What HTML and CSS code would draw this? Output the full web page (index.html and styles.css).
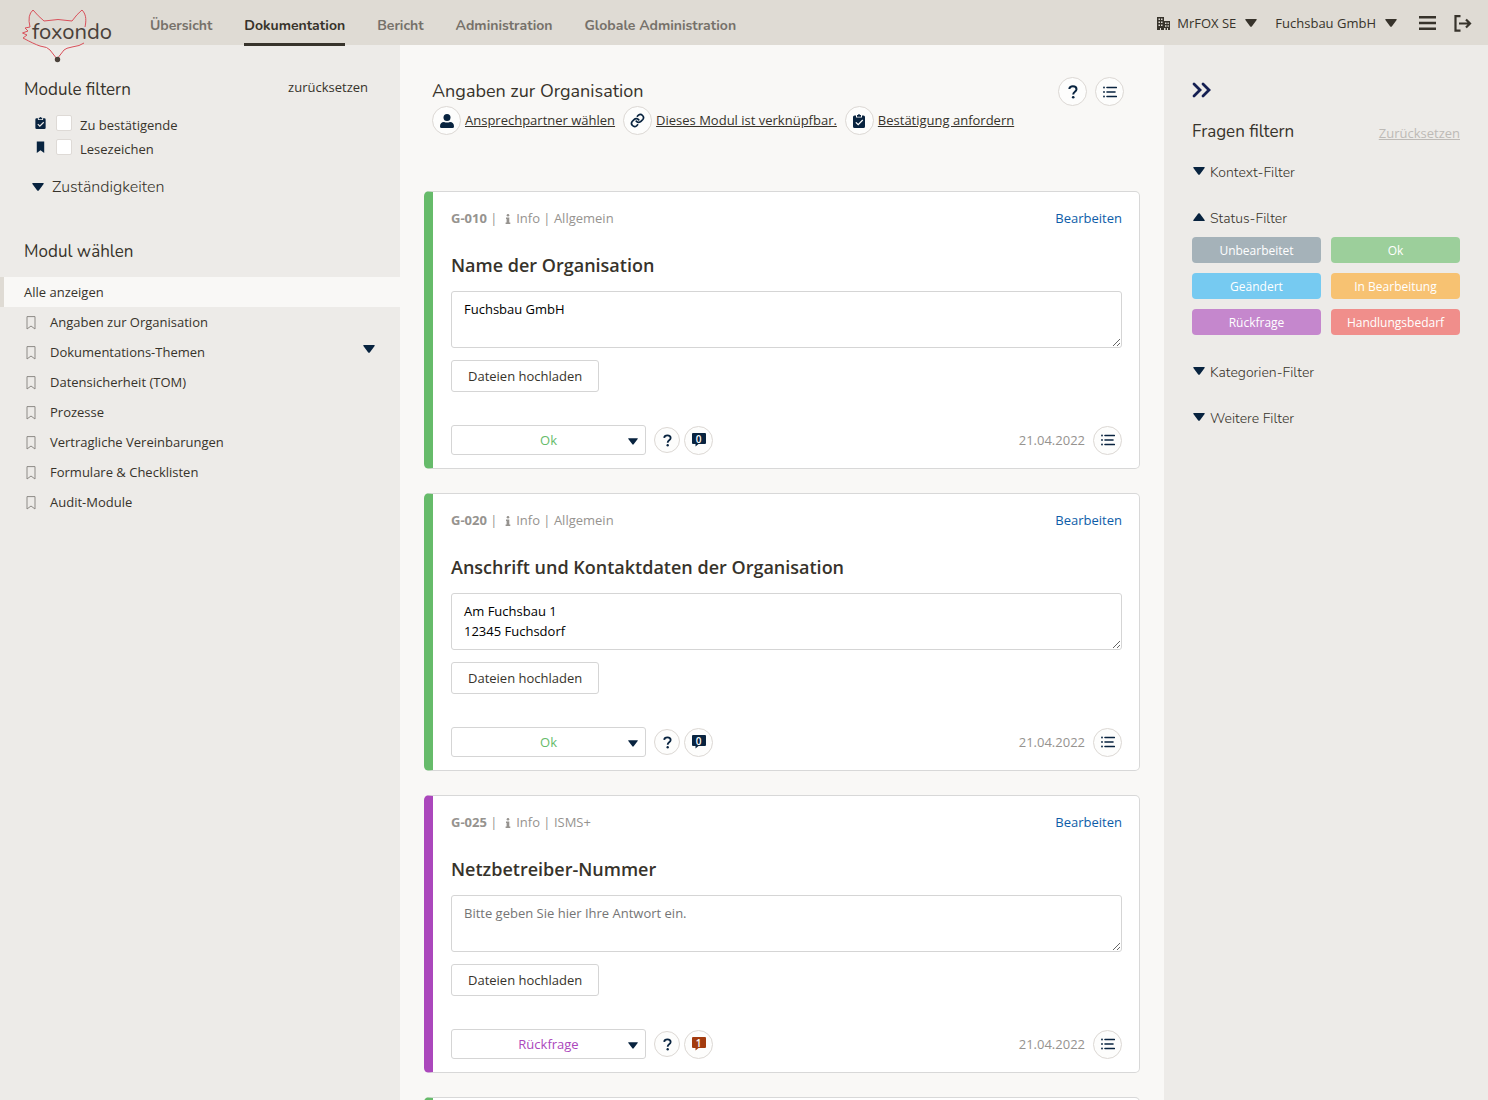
FILE: index.html
```html
<!DOCTYPE html>
<html lang="de">
<head>
    <meta charset="utf-8">
    <title>foxondo - Dokumentation</title>
    <link rel="stylesheet" href="styles.css">
</head>
<body>
    <svg class="sprite" aria-hidden="true">
        <symbol id="down" viewBox="0 0 12 8"><path d="M1 0h10q1.4 0 .6 1L6.800 7.400q-.8.900-1.600 0L.4 1Q-.4 0 1 0z"/></symbol>
        <symbol id="up" viewBox="0 0 12 8"><path d="M1 8h10q1.400 0 .6-1L6.800.6q-.8-.9-1.600 0L.4 7Q-.4 8 1 8z"/></symbol>
        <symbol id="list" viewBox="0 0 14 12"><path d="M4 1.500h9.300M4 6h8M4 10.500h9.300" stroke="currentColor" stroke-width="1.600" stroke-linecap="round"/><circle cx="1" cy="1.500" r=".9"/><circle cx="1" cy="6" r=".9"/><circle cx="1" cy="10.500" r=".9"/></symbol>
        <symbol id="help" viewBox="0 0 10 14"><path d="M1.300 4C1.500 2.200 3 1.200 4.900 1.200c2.100 0 3.600 1.200 3.600 3 0 2.600-3.300 2.500-3.300 5.200" fill="none" stroke="currentColor" stroke-width="2"/><circle cx="5.200" cy="12.300" r="1.300"/></symbol>
        <symbol id="clipboard" viewBox="0 0 12 14"><path fill-rule="evenodd" d="M1.500 1.500H3V3.500h6V1.500h1.500Q12 1.500 12 3v9.500q0 1.500-1.500 1.500h-9Q0 14 0 12.500V3q0-1.500 1.500-1.500zM9.300 5.600 5.200 9.700 3.300 7.900l-.9.900 2.800 2.800 5-5z"/><path d="M4 1h1Q6-.8 7 1h1v1.700H4z"/></symbol>
        <symbol id="bookmark" viewBox="0 0 10 14"><path d="M1 .6h8v12.400L5 10l-4 3z"/></symbol>
        <symbol id="user" viewBox="0 0 14 14"><circle cx="7" cy="3.500" r="3.500"/><path d="M0 12.500C0 9.700 1.500 8 4 8q3 1.200 6 0c2.500 0 4 1.700 4 4.500Q14 14 12.500 14h-11Q0 14 0 12.500z"/></symbol>
        <symbol id="link" viewBox="0 0 24 24"><path d="M10 13a5 5 0 0 0 7.500.5l3-3a5 5 0 0 0-7-7l-1.700 1.700M14 11a5 5 0 0 0-7.500-.5l-3 3a5 5 0 0 0 7 7l1.700-1.700" fill="none" stroke="currentColor" stroke-width="2.700" stroke-linecap="round"/></symbol>
        <symbol id="info" viewBox="0 0 6 10"><circle cx="3" cy="1.300" r="1.300"/><path d="M1 3.600h3.300v4.900h1V10H.6V8.500h1V5.100H1z"/></symbol>
        <symbol id="bubble" viewBox="0 0 14 14"><path d="M1 0h12q1 0 1 1v9q0 1-1 1H6.500L3.500 13.500V11H1Q0 11 0 10V1Q0 0 1 0z"/></symbol>
    </svg>

    <header class="topbar">
        <a class="logo" href="#" aria-label="foxondo">
            <svg width="94" height="60" viewBox="20 6 94 60">
                <path class="fox" d="M85 27C86 22 87 15 82 10Q77 14 72 21Q58 18 44 21Q38 16 33 10Q27 15 30 27L25 28L28 31L22.500 33L27 35L23 38Q34 44 40 46Q48 47 50 50L57 59L64 50Q66 48 72 47Q80 46 84 43"/>
                <circle class="nose" cx="57.500" cy="59.500" r="2.700"/>
                <text x="32" y="39">foxondo</text>
            </svg>
        </a>
        <nav class="mainnav">
            <a href="#">Übersicht</a>
            <a href="#" class="active">Dokumentation</a>
            <a href="#">Bericht</a>
            <a href="#">Administration</a>
            <a href="#">Globale Administration</a>
        </nav>
        <div class="account">
            <button type="button" class="switch">
                <svg width="14" height="14" viewBox="0 0 14 14"><path fill-rule="evenodd" d="M0 14V1h7v4h6v9h-2v-2h-1v2H4v-2H3v2zM1.500 2.500V4H3V2.500zM4 2.500V4h1.500V2.500zM1.500 5.500V7H3V5.500zM4 5.500V7h1.500V5.500zM1.500 8.500V10H3V8.500zM4 8.500V10h1.500V8.500zM8 6.500V8h1.500V6.500zM10.500 6.500V8h1.300V6.500zM8 9.300v1.500h1.500V9.300zM10.500 9.300v1.500h1.300V9.300zM7 12v2h1.500v-2z"/></svg>
                MrFOX SE
                <svg class="arrow" width="12" height="8"><use href="#down"/></svg>
            </button>
            <button type="button" class="switch">
                Fuchsbau GmbH
                <svg class="arrow" width="12" height="8"><use href="#down"/></svg>
            </button>
            <button type="button" class="menu" aria-label="Menü">
                <svg width="17" height="14" viewBox="0 0 17 14"><path d="M0 0h17v2.500H0zM0 5.750h17v2.500H0zM0 11.500h17V14H0z"/></svg>
            </button>
            <button type="button" aria-label="Abmelden">
                <svg width="18" height="17" viewBox="0 0 18 17"><path d="M6.500 1.200H1.500v14.500h5M5 8.500h11M12 4.500l4 4-4 4" fill="none" stroke="currentColor" stroke-width="2.200"/></svg>
            </button>
        </div>
    </header>

    <div class="layout">
        <aside class="modules">
            <div class="side-head">
                <h2>Module filtern</h2>
                <a href="#" class="reset">zurücksetzen</a>
            </div>
            <div class="check">
                <svg width="11" height="12"><use href="#clipboard"/></svg>
                <input type="checkbox" id="confirm">
                <label for="confirm">Zu bestätigende</label>
            </div>
            <div class="check">
                <svg width="11" height="13"><use href="#bookmark"/></svg>
                <input type="checkbox" id="marked">
                <label for="marked">Lesezeichen</label>
            </div>
            <button type="button" class="fold fold-large">
                <svg width="12" height="8"><use href="#down"/></svg>Zuständigkeiten
            </button>

            <h2 class="choose">Modul wählen</h2>
            <ul class="module-list">
                <li class="current"><a href="#">Alle anzeigen</a></li>
                <li><svg class="mark" width="10" height="14"><use href="#bookmark"/></svg><a href="#">Angaben zur Organisation</a></li>
                <li><svg class="mark" width="10" height="14"><use href="#bookmark"/></svg><a href="#">Dokumentations-Themen</a><svg class="expand" width="12" height="8"><use href="#down"/></svg></li>
                <li><svg class="mark" width="10" height="14"><use href="#bookmark"/></svg><a href="#">Datensicherheit (TOM)</a></li>
                <li><svg class="mark" width="10" height="14"><use href="#bookmark"/></svg><a href="#">Prozesse</a></li>
                <li><svg class="mark" width="10" height="14"><use href="#bookmark"/></svg><a href="#">Vertragliche Vereinbarungen</a></li>
                <li><svg class="mark" width="10" height="14"><use href="#bookmark"/></svg><a href="#">Formulare &amp; Checklisten</a></li>
                <li><svg class="mark" width="10" height="14"><use href="#bookmark"/></svg><a href="#">Audit-Module</a></li>
            </ul>
        </aside>

        <main>
            <div class="module-head">
                <div class="title-row">
                    <h1>Angaben zur Organisation</h1>
                    <button type="button" class="round" aria-label="Hilfe"><svg width="10" height="14"><use href="#help"/></svg></button>
                    <button type="button" class="round" aria-label="Protokoll"><svg width="14" height="12"><use href="#list"/></svg></button>
                </div>
                <div class="actions">
                    <a href="#"><span class="round"><svg width="14" height="14"><use href="#user"/></svg></span><span class="text">Ansprechpartner wählen</span></a>
                    <a href="#"><span class="round"><svg width="15" height="15"><use href="#link"/></svg></span><span class="text">Dieses Modul ist verknüpfbar.</span></a>
                    <a href="#"><span class="round"><svg width="12" height="14"><use href="#clipboard"/></svg></span><span class="text">Bestätigung anfordern</span></a>
                </div>
            </div>

            <article class="card ok">
                <div class="meta">
                    <span><b>G-010</b> | <svg width="10" height="10"><use href="#info"/></svg> Info | Allgemein</span>
                    <a href="#">Bearbeiten</a>
                </div>
                <h3><label for="answer-010">Name der Organisation</label></h3>
                <textarea id="answer-010" placeholder="Bitte geben Sie hier Ihre Antwort ein.">Fuchsbau GmbH</textarea>
                <button type="button" class="upload">Dateien hochladen</button>
                <div class="card-foot">
                    <div class="status">
                        <select aria-label="Status G-010"><option>Ok</option><option>Rückfrage</option></select>
                        <svg width="10" height="7"><use href="#down"/></svg>
                    </div>
                    <button type="button" class="round small" aria-label="Hilfe"><svg width="9" height="13"><use href="#help"/></svg></button>
                    <button type="button" class="round comments"><svg width="14" height="14"><use href="#bubble"/></svg><span>0</span></button>
                    <time datetime="2022-04-21">21.04.2022</time>
                    <button type="button" class="round" aria-label="Protokoll"><svg width="14" height="12"><use href="#list"/></svg></button>
                </div>
            </article>

            <article class="card ok">
                <div class="meta">
                    <span><b>G-020</b> | <svg width="10" height="10"><use href="#info"/></svg> Info | Allgemein</span>
                    <a href="#">Bearbeiten</a>
                </div>
                <h3><label for="answer-020">Anschrift und Kontaktdaten der Organisation</label></h3>
                <textarea id="answer-020" placeholder="Bitte geben Sie hier Ihre Antwort ein.">Am Fuchsbau 1
12345 Fuchsdorf</textarea>
                <button type="button" class="upload">Dateien hochladen</button>
                <div class="card-foot">
                    <div class="status">
                        <select aria-label="Status G-020"><option>Ok</option><option>Rückfrage</option></select>
                        <svg width="10" height="7"><use href="#down"/></svg>
                    </div>
                    <button type="button" class="round small" aria-label="Hilfe"><svg width="9" height="13"><use href="#help"/></svg></button>
                    <button type="button" class="round comments"><svg width="14" height="14"><use href="#bubble"/></svg><span>0</span></button>
                    <time datetime="2022-04-21">21.04.2022</time>
                    <button type="button" class="round" aria-label="Protokoll"><svg width="14" height="12"><use href="#list"/></svg></button>
                </div>
            </article>

            <article class="card query">
                <div class="meta">
                    <span><b>G-025</b> | <svg width="10" height="10"><use href="#info"/></svg> Info | ISMS+</span>
                    <a href="#">Bearbeiten</a>
                </div>
                <h3><label for="answer-025">Netzbetreiber-Nummer</label></h3>
                <textarea id="answer-025" placeholder="Bitte geben Sie hier Ihre Antwort ein."></textarea>
                <button type="button" class="upload">Dateien hochladen</button>
                <div class="card-foot">
                    <div class="status">
                        <select aria-label="Status G-025"><option>Rückfrage</option><option>Ok</option></select>
                        <svg width="10" height="7"><use href="#down"/></svg>
                    </div>
                    <button type="button" class="round small" aria-label="Hilfe"><svg width="9" height="13"><use href="#help"/></svg></button>
                    <button type="button" class="round comments open"><svg width="14" height="14"><use href="#bubble"/></svg><span>1</span></button>
                    <time datetime="2022-04-21">21.04.2022</time>
                    <button type="button" class="round" aria-label="Protokoll"><svg width="14" height="12"><use href="#list"/></svg></button>
                </div>
            </article>

            <article class="card ok"></article>
        </main>

        <aside class="questions">
            <button type="button" class="collapse" aria-label="Einklappen">
                <svg width="20" height="16" viewBox="0 0 20 16"><path d="M2 2l6 6-6 6M11 2l6 6-6 6" fill="none" stroke="currentColor" stroke-width="2.800" stroke-linecap="round"/></svg>
            </button>
            <div class="side-head">
                <h2>Fragen filtern</h2>
                <a href="#" class="reset off">Zurücksetzen</a>
            </div>
            <button type="button" class="fold"><svg width="12" height="8"><use href="#down"/></svg>Kontext-Filter</button>
            <button type="button" class="fold"><svg width="12" height="8"><use href="#up"/></svg>Status-Filter</button>
            <div class="status-grid">
                <button type="button" class="s-new">Unbearbeitet</button>
                <button type="button" class="s-ok">Ok</button>
                <button type="button" class="s-changed">Geändert</button>
                <button type="button" class="s-progress">In Bearbeitung</button>
                <button type="button" class="s-query">Rückfrage</button>
                <button type="button" class="s-action">Handlungsbedarf</button>
            </div>
            <button type="button" class="fold"><svg width="12" height="8"><use href="#down"/></svg>Kategorien-Filter</button>
            <button type="button" class="fold"><svg width="12" height="8"><use href="#down"/></svg>Weitere Filter</button>
        </aside>
    </div>
</body>
</html>
```
FILE: styles.css
```css
* {
    box-sizing: border-box;
}
body {
    display: flex;
    flex-direction: column;
    height: 100vh;
    margin: 0;
    overflow: hidden;
    background-color: #f9f8f6;
    color: #37332b;
    font-family: "Open Sans", sans-serif;
    font-size: 13px;
    line-height: 20px;
}
h1, h2, h3, ul {
    margin: 0;
    padding: 0;
    list-style: none;
}
h1, h2 {
    font-family: Nunito, Lato, sans-serif;
    font-weight: 400;
    line-height: 28px;
}
h1 {
    font-size: 18px;
}
h2 {
    font-size: 17px;
}
a {
    color: inherit;
    text-decoration: none;
}
button, select, textarea {
    font: inherit;
    color: inherit;
}
button {
    padding: 0;
    border: 0;
    background: none;
    cursor: pointer;
}
svg {
    flex: none;
    fill: currentColor;
}
.sprite {
    position: absolute;
    width: 0;
    height: 0;
}

/* top bar */
.topbar {
    display: flex;
    z-index: 1;
    height: 45px;
    padding: 0 16px 0 20px;
    background-color: #dfdbd4;
}
.logo {
    width: 94px;
    height: 60px;
    padding-top: 6px;
}
.logo .fox {
    fill: none;
    stroke: #d9505a;
    stroke-width: 1;
}
.logo .nose {
    fill: #4a413a;
}
.logo text {
    fill: #4a413a;
    font-family: Nunito, Lato, sans-serif;
    font-size: 22px;
}
.mainnav {
    display: flex;
    gap: 32px;
    margin-left: 36px;
    color: #76716a;
    font-family: Nunito, Lato, sans-serif;
    font-size: 14px;
    font-weight: 700;
}
.mainnav a {
    height: 46px;
    padding-top: 16px;
}
.mainnav .active {
    border-bottom: 3px solid #37332b;
    color: #37332b;
}
.account {
    display: flex;
    align-items: center;
    gap: 18px;
    margin-left: auto;
    padding-top: 1px;
}
.switch {
    display: flex;
    align-items: center;
    gap: 6px;
}
.switch .arrow {
    margin-left: 3px;
}
.menu {
    margin-left: 4px;
}
.account > button svg {
    display: block;
}

.layout {
    display: flex;
    flex: 1;
    min-height: 0;
}
.modules, .questions {
    flex: none;
    background-color: #edebe8;
}
.side-head {
    display: flex;
    justify-content: space-between;
}

/* module list */
.modules {
    width: 400px;
    padding-top: 31px;
}
.modules .side-head {
    padding: 0 32px 0 24px;
    margin-bottom: 9px;
}
.modules .reset {
    padding-top: 1px;
}
.check {
    display: flex;
    height: 24px;
    padding-left: 35px;
}
.check svg {
    margin-top: 4px;
    color: #08233f;
}
.check input {
    appearance: none;
    width: 16px;
    height: 16px;
    margin: 2px 8px 0 10px;
    border: 1px solid #dedad6;
    border-radius: 2px;
    background-color: #fff;
}
.check label {
    padding-top: 2px;
}
.fold {
    display: flex;
    align-items: center;
    gap: 5px;
    font-family: Nunito, Lato, sans-serif;
    font-size: 14px;
    font-weight: 300;
}
.fold svg {
    color: #08233f;
}
.fold-large {
    gap: 8px;
    margin: 16px 0 0 32px;
    font-size: 16px;
}
.choose {
    margin: 41px 0 11px 24px;
}
.module-list li {
    display: flex;
    align-items: center;
    height: 30px;
    padding: 0 25px 0 26px;
}
.module-list .current {
    padding-left: 20px;
    border-left: 4px solid #dfdbd4;
    background-color: #f9f8f6;
}
.mark {
    margin: 2px 14px 0 0;
    overflow: visible;
    color: #8d8a86;
    fill: none;
    stroke: currentColor;
}
.expand {
    margin: 0 0 6px auto;
    color: #08233f;
}

/* questions */
main {
    flex: 1;
    min-width: 0;
    padding: 32px 24px 0;
    overflow-y: auto;
    scrollbar-width: none;
}
.module-head {
    padding: 0 16px 0 8px;
    margin-bottom: 56px;
}
.title-row {
    display: flex;
    align-items: flex-start;
    gap: 8px;
}
.title-row h1 {
    flex: 1;
}
.actions {
    display: flex;
    gap: 8px;
}
.actions a {
    display: flex;
    align-items: center;
    gap: 4px;
}
.actions .text {
    padding-bottom: 2px;
    text-decoration: underline;
}
.round {
    display: flex;
    flex: none;
    align-items: center;
    justify-content: center;
    width: 29px;
    height: 29px;
    border: 1px solid #dcd8d4;
    border-radius: 50%;
    background-color: #fdfdfc;
    color: #08233f;
}
.round.small {
    width: 26px;
    height: 26px;
}
.card {
    min-height: 278px;
    margin-bottom: 24px;
    padding: 16px 17px 13px 18px;
    border: 1px solid #d8d8d8;
    border-left: 9px solid #66bb6a;
    border-radius: 5px;
    background-color: #fff;
}
.card.query {
    border-left-color: #ab47bc;
}
.meta {
    display: flex;
    justify-content: space-between;
    margin-bottom: 23px;
    color: #96938f;
}
.meta svg {
    margin-left: 2px;
    vertical-align: -1px;
}
.meta a {
    color: #0d5ca8;
}
.card h3 {
    margin-bottom: 12px;
    font-size: 18px;
    font-weight: 550;
    line-height: 28px;
}
.card textarea {
    display: block;
    width: 100%;
    height: 57px;
    padding: 7px 12px;
    border: 1px solid #d5d5d5;
    border-radius: 3px;
    color: #000;
    resize: vertical;
}
.card textarea::placeholder {
    color: #757575;
}
.upload {
    height: 32px;
    margin-top: 12px;
    padding: 0 16px;
    border: 1px solid #d5d5d5;
    border-radius: 3px;
}
.card-foot {
    display: flex;
    align-items: center;
    height: 30px;
    margin-top: 33px;
}
.status {
    position: relative;
    width: 195px;
    margin-right: 8px;
}
.status select {
    appearance: none;
    display: block;
    width: 100%;
    height: 30px;
    padding: 0;
    border: 1px solid #d5d5d5;
    border-radius: 3px;
    background-color: #fff;
    color: #66bb6a;
    text-align: center;
    text-align-last: center;
}
.query .status select {
    color: #ab47bc;
}
.status svg {
    position: absolute;
    top: 13px;
    right: 8px;
    color: #08233f;
    pointer-events: none;
}
.comments {
    position: relative;
    margin-left: 4px;
}
.comments span {
    position: absolute;
    top: 6px;
    color: #fff;
    font-size: 10px;
    font-weight: 600;
    line-height: 12px;
}
.comments.open {
    color: #a33b0e;
}
time {
    margin: 0 8px 0 auto;
    color: #96938f;
}

/* question filter */
.questions {
    width: 324px;
    padding: 37px 28px 0;
}
.collapse {
    display: block;
    color: #141f52;
}
.collapse svg {
    display: block;
}
.questions .side-head {
    margin: 20px 0 17px;
}
.reset.off {
    padding-top: 5px;
    color: #bdbab6;
    text-decoration: underline;
}
.questions .fold {
    margin-bottom: 26px;
    padding-left: 1px;
}
.questions .fold svg {
    margin-bottom: 4px;
}
.status-grid {
    display: grid;
    grid-template-columns: 1fr 1fr;
    gap: 10px;
    margin: -18px 0 28px;
}
.status-grid button {
    height: 26px;
    padding-top: 2px;
    border-radius: 4px;
    color: #fff;
    font-size: 12px;
}
.s-new {
    background-color: #a5b2b9;
}
.s-ok {
    background-color: #9ccf9b;
}
.s-changed {
    background-color: #76caf1;
}
.s-progress {
    background-color: #f7c272;
}
.s-query {
    background-color: #c587cd;
}
.s-action {
    background-color: #f08e8b;
}
```
